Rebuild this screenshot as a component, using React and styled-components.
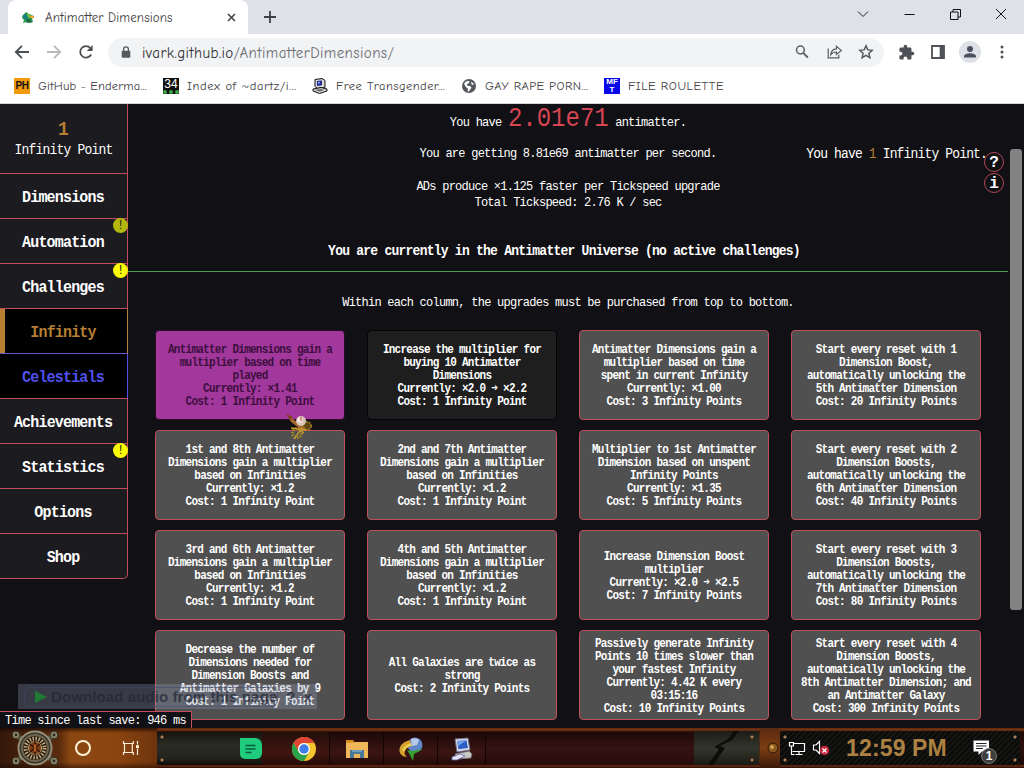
import React from "react";
import styled, { createGlobalStyle, css } from "styled-components";

const navItems = [
  { label: "Dimensions" },
  { label: "Automation", badge: "dim" },
  { label: "Challenges", badge: "bright" },
  { label: "Infinity", variant: "infinity" },
  { label: "Celestials", variant: "celestials" },
  { label: "Achievements" },
  { label: "Statistics", badge: "bright" },
  { label: "Options" },
  { label: "Shop" },
];

const upgrades = [
  {
    state: "bought",
    lines: [
      "Antimatter Dimensions gain a",
      "multiplier based on time",
      "played",
      "Currently: ×1.41",
      "Cost: 1 Infinity Point",
    ],
  },
  {
    state: "available",
    lines: [
      "Increase the multiplier for",
      "buying 10 Antimatter",
      "Dimensions",
      "Currently: ×2.0 ➜ ×2.2",
      "Cost: 1 Infinity Point",
    ],
  },
  {
    lines: [
      "Antimatter Dimensions gain a",
      "multiplier based on time",
      "spent in current Infinity",
      "Currently: ×1.00",
      "Cost: 3 Infinity Points",
    ],
  },
  {
    lines: [
      "Start every reset with 1",
      "Dimension Boost,",
      "automatically unlocking the",
      "5th Antimatter Dimension",
      "Cost: 20 Infinity Points",
    ],
  },
  {
    lines: [
      "1st and 8th Antimatter",
      "Dimensions gain a multiplier",
      "based on Infinities",
      "Currently: ×1.2",
      "Cost: 1 Infinity Point",
    ],
  },
  {
    lines: [
      "2nd and 7th Antimatter",
      "Dimensions gain a multiplier",
      "based on Infinities",
      "Currently: ×1.2",
      "Cost: 1 Infinity Point",
    ],
  },
  {
    lines: [
      "Multiplier to 1st Antimatter",
      "Dimension based on unspent",
      "Infinity Points",
      "Currently: ×1.35",
      "Cost: 5 Infinity Points",
    ],
  },
  {
    lines: [
      "Start every reset with 2",
      "Dimension Boosts,",
      "automatically unlocking the",
      "6th Antimatter Dimension",
      "Cost: 40 Infinity Points",
    ],
  },
  {
    lines: [
      "3rd and 6th Antimatter",
      "Dimensions gain a multiplier",
      "based on Infinities",
      "Currently: ×1.2",
      "Cost: 1 Infinity Point",
    ],
  },
  {
    lines: [
      "4th and 5th Antimatter",
      "Dimensions gain a multiplier",
      "based on Infinities",
      "Currently: ×1.2",
      "Cost: 1 Infinity Point",
    ],
  },
  {
    lines: [
      "Increase Dimension Boost",
      "multiplier",
      "Currently: ×2.0 ➜ ×2.5",
      "Cost: 7 Infinity Points",
    ],
  },
  {
    lines: [
      "Start every reset with 3",
      "Dimension Boosts,",
      "automatically unlocking the",
      "7th Antimatter Dimension",
      "Cost: 80 Infinity Points",
    ],
  },
  {
    lines: [
      "Decrease the number of",
      "Dimensions needed for",
      "Dimension Boosts and",
      "Antimatter Galaxies by 9",
      "Cost: 1 Infinity Point",
    ],
  },
  {
    lines: [
      "All Galaxies are twice as",
      "strong",
      "Cost: 2 Infinity Points",
    ],
  },
  {
    lines: [
      "Passively generate Infinity",
      "Points 10 times slower than",
      "your fastest Infinity",
      "Currently: 4.42 K every",
      "03:15:16",
      "Cost: 10 Infinity Points",
    ],
  },
  {
    lines: [
      "Start every reset with 4",
      "Dimension Boosts,",
      "automatically unlocking the",
      "8th Antimatter Dimension; and",
      "an Antimatter Galaxy",
      "Cost: 300 Infinity Points",
    ],
  },
];

const Favicon = () => (
  <svg width="14" height="14" viewBox="0 0 14 14">
    <path d="M2 4l3-3 3 2 2 1 3 1-2 3 1 3-3 1-3-1-4 1 1-3-2-2z" fill="#2a9d4c" />
    <path d="M1 5l4-2 3 3-3 3z" fill="#157f83" />
    <path d="M6 3l4 0 0 3-3 1z" fill="#7cb93d" />
    <path d="M9 5h4v2H9z" fill="#e0a52e" />
    <path d="M5 8h4l2 3-5 1z" fill="#1d6b45" />
  </svg>
);

const BackIcon = ({ color = "#4b4e52", flip }) => (
  <svg width="16" height="16" viewBox="0 0 16 16" fill="none" stroke={color} strokeWidth="1.8">
    <path d={flip ? "M1 8h13M8 1.8L14.2 8 8 14.2" : "M15 8H2M8 1.8L1.8 8 8 14.2"} />
  </svg>
);

const ReloadIcon = () => (
  <svg width="16" height="16" viewBox="0 0 16 16">
    <path d="M13.2 10.5A5.8 5.8 0 1 1 12.4 4" fill="none" stroke="#4b4e52" strokeWidth="1.8" />
    <path d="M14.6 1v6H8.8z" fill="#4b4e52" />
  </svg>
);

const LockIcon = () => (
  <svg width="10" height="13" viewBox="0 0 10 13">
    <rect x="0.7" y="4.8" width="8.6" height="7" rx="1" fill="#55585c" />
    <path d="M2.6 5V3.2a2.4 2.4 0 0 1 4.8 0V5" fill="none" stroke="#55585c" strokeWidth="1.3" />
  </svg>
);

const SearchIcon = () => (
  <svg width="16" height="16" viewBox="0 0 16 16" fill="none" stroke="#5a5d61" strokeWidth="1.5">
    <circle cx="6.4" cy="6" r="3.9" />
    <path d="M9.2 8.9l4.6 4.6" strokeWidth="1.8" />
  </svg>
);

const ShareIcon = () => (
  <svg width="17" height="16" viewBox="0 0 17 16" fill="none" stroke="#5a5d61" strokeWidth="1.2">
    <path d="M2.2 4.5v9.3h10.6v-3" />
    <path d="M4.8 10.6c.3-3.6 2.2-5.5 5.6-5.7V2.2l4.9 4.2-4.9 4.1V8c-2.4 0-4.2.7-5.6 2.6z" />
  </svg>
);

const StarIcon = () => (
  <svg width="16" height="16" viewBox="0 0 16 16" fill="none" stroke="#55585c" strokeWidth="1.5">
    <path d="M8 1.8l1.8 4.1 4.5.4-3.4 3 1 4.4L8 11.4l-3.9 2.3 1-4.4-3.4-3 4.5-.4z" />
  </svg>
);

const PuzzleIcon = () => (
  <svg width="17" height="17" viewBox="0 0 24 24" fill="#4e5155">
    <path d="M20.5 11H19V7c0-1.1-.9-2-2-2h-4V3.5a2.5 2.5 0 0 0-5 0V5H4c-1.1 0-2 .9-2 2v3.8h1.5a2.7 2.7 0 0 1 0 5.4H2V20c0 1.100.9 2 2 2h3.8v-1.5a2.7 2.7 0 0 1 5.4 0V22H17c1.1 0 2-.9 2-2v-4h1.5a2.5 2.5 0 0 0 0-5z" />
  </svg>
);

const PanelIcon = () => (
  <svg width="14" height="14" viewBox="0 0 14 14">
    <path d="M1 1h12v12H1z" fill="none" stroke="#4e5155" strokeWidth="1.8" />
    <path d="M8.7 1H13v12H8.7z" fill="#4e5155" />
  </svg>
);

const PersonIcon = () => (
  <svg width="14" height="14" viewBox="0 0 14 14" fill="#4a5060">
    <circle cx="7" cy="4" r="3" />
    <path d="M1 12.5v-1.2C1 9.3 4.5 8.3 7 8.3s6 1 6 3v1.2z" />
  </svg>
);

const DotsIcon = () => (
  <svg width="4" height="14" viewBox="0 0 4 14" fill="#4e5155">
    <circle cx="2" cy="2" r="1.5" />
    <circle cx="2" cy="7" r="1.5" />
    <circle cx="2" cy="12" r="1.5" />
  </svg>
);

const GlobeIcon = () => (
  <svg width="16" height="16" viewBox="0 0 16 16">
    <circle cx="8" cy="8" r="7" fill="#55585c" />
    <path d="M3 5.5l2.5-2.3 3-.2-.5 2-2.2 1.3.6 1.5 2.6.2 1.5 1.5-1 1.8-2 2.4-.8-.2.2-2.8-2-1.6z" fill="#fff" />
    <path d="M10 3.5l2.6 2-.2 1.6-1.8-.6z" fill="#fff" />
  </svg>
);

const OldPcIcon = () => (
  <svg width="16" height="16" viewBox="0 0 16 16">
    <path d="M3 1.5L10 .5l3 2v7l-7.5 1L3 8.5z" fill="#d7d7d7" stroke="#111" />
    <path d="M5 3l5-.6v4.8L5 8z" fill="#232a8c" />
    <path d="M6 4l2-.3v1.5L6 5.7z" fill="#8fa9ff" />
    <path d="M1 11l8-1.5 6 1.5v2l-7.5 2.5L1 13z" fill="#cfcfcf" stroke="#111" />
    <path d="M3 12l6-1 3 1-4.500 1.5z" fill="#666" />
  </svg>
);

const CannonCursor = () => (
  <svg width="30" height="28" viewBox="0 0 30 28">
    <circle cx="23" cy="13" r="4.2" fill="#5c4414" stroke="#a47d24" strokeWidth="1.5" strokeDasharray="2 1" />
    <path d="M3 2l19 13-3 3L7 9z" fill="#a8672a" />
    <path d="M2 1l7 3-3 3z" fill="#7c3f22" />
    <circle cx="13" cy="20" r="4.5" fill="none" stroke="#a98621" strokeWidth="3" strokeDasharray="1.5 1.2" />
    <path d="M7 15l16 2M10 26l8-11M14 15l6 5" stroke="#c29a32" strokeWidth="1.3" />
    <circle cx="17" cy="8" r="5" fill="#d9c3b8" />
    <circle cx="16" cy="7" r="2.8" fill="#f3e9e4" />
    <path d="M17 4v4" stroke="#b5392c" />
  </svg>
);

const StartOrb = () => (
  <svg width="50" height="36" viewBox="0 0 50 36">
    {[[6, 5], [44, 5], [6, 31], [44, 31]].map(([x, y]) => (
      <g key={`${x}-${y}`}>
        <path d={`M25 18L${x} ${y}`} stroke="#5d5a48" strokeWidth="5" />
        <circle cx={x} cy={y} r="3.8" fill="#8b8871" stroke="#34301f" />
        <circle cx={x} cy={y} r="1.4" fill="#2a2619" />
      </g>
    ))}
    <circle cx="25" cy="18" r="16.5" fill="#3a352a" stroke="#938e75" strokeWidth="2" />
    <circle cx="25" cy="18" r="13" fill="#29190d" stroke="#6c654f" strokeWidth="2" />
    <circle cx="25" cy="18" r="9.5" fill="none" stroke="#bba983" strokeWidth="4" strokeDasharray="1.5 1.5" />
    <circle cx="25" cy="18" r="6.5" fill="#7a3b17" stroke="#c0a272" strokeWidth="1" />
    <path d="M25 11v14M20 14l10 8M30 14l-10 8" stroke="#34170b" strokeWidth="1.5" />
    <path d="M25 14.5v7" stroke="#df7927" strokeWidth="1.5" />
  </svg>
);

const TaskViewIcon = () => (
  <svg width="18" height="16" viewBox="0 0 18 16" fill="none" stroke="#fff1d5" strokeWidth="1.2">
    <path d="M1.5 1v2.5h9.8V1M1.5 15v-2.5h9.8V15M2.5 3.5v9M10.3 3.5v9M15.5 1v3.5M15.5 8.5V15" />
    <path d="M14 5.2h3V8h-3z" fill="#fff1d5" stroke="none" />
  </svg>
);

const NoteIcon = () => (
  <svg width="22" height="22" viewBox="0 0 22 22">
    <path d="M0 0h15a7 7 0 0 1 7 7v8a6 6 0 0 1-6 6H5a5 5 0 0 1-5-5z" fill="#1fcb7c" />
    <path d="M5.5 7.5h10M5.5 11h10M5.5 14.5h6" stroke="#0b5c3c" strokeWidth="1.6" />
  </svg>
);

const ChromeIcon = () => (
  <svg width="24" height="24" viewBox="0 0 24 24">
    <circle cx="12" cy="12" r="12" fill="#f6c52d" />
    <path d="M1.6 6A12 12 0 0 1 22.400 6H12a6 6 0 0 0-5.200 9z" fill="#dd4535" />
    <path d="M1.6 6A12 12 0 0 0 12 24l5.200-9A6 6 0 0 1 6.800 15z" fill="#2ba24c" />
    <circle cx="12" cy="12" r="6" fill="#fff" />
    <circle cx="12" cy="12" r="4.7" fill="#3f7ee8" />
  </svg>
);

const FolderIcon = () => (
  <svg width="24" height="20" viewBox="0 0 24 20">
    <path d="M1 1h7l2 3H1z" fill="#d78b1a" />
    <path d="M1 4l10-1h12v16H1z" fill="#efb65a" />
    <path d="M5 19v-8h14v8h-4v-4H9v4z" fill="#48799b" />
    <path d="M7 11h10v2H7z" fill="#6ea0bd" />
  </svg>
);

const IdmIcon = () => (
  <svg width="26" height="24" viewBox="0 0 26 24">
    <circle cx="17" cy="8" r="7.5" fill="#5f86c9" />
    <path d="M13 2q5-2 8 1l-2 5-5 1z" fill="#b8c9e8" />
    <path d="M12 3C4 5 0 10 2 16c2 4 7 4 7 4-4-3-3-8 4-11z" fill="#d7a12a" />
    <path d="M4 13c2-4 5-6 9-7l1 3c-4 0-7 2-8 6z" fill="#e9cf57" />
    <path d="M9 13l5 1 11-2-9 5-1 7-3-6z" fill="#35a02f" />
  </svg>
);

const DesktopIcon = () => (
  <svg width="22" height="24" viewBox="0 0 22 24">
    <path d="M4 2l13-1 2 12-13 2z" fill="#dcdce8" stroke="#6b6c86" />
    <path d="M6 4l9.5-.8L17 11l-9.5 1.3z" fill="#2b5fc4" />
    <path d="M6 4l9.5-.8-8.500 6z" fill="#6ea0e8" />
    <path d="M4 17l14-3 3 3-1 4-14 1z" fill="#c9c7c4" stroke="#6c6870" />
    <path d="M1 20l8-3 5 2-8 4H1z" fill="#e6e4f0" stroke="#6464a8" strokeWidth=".8" />
  </svg>
);

const NetworkIcon = () => (
  <svg width="18" height="15" viewBox="0 0 18 15" fill="none" stroke="#fff" strokeWidth="1.2">
    <path d="M6 2.5h10.5v8H4.5M11 10.5v3M7.5 13.5h7" />
    <path d="M1.5 1.5h4V5h-4zM3.500 5v8.5h3" />
  </svg>
);

const MutedIcon = () => (
  <svg width="18" height="16" viewBox="0 0 18 16">
    <path d="M1.5 5H4l3.500-3.500v12L4 10H1.500z" fill="none" stroke="#fff" strokeWidth="1.2" />
    <circle cx="12.5" cy="10.5" r="4.7" fill="#c5283d" />
    <path d="M10.5 8.5l4 4M14.5 8.5l-4 4" stroke="#fff" strokeWidth="1.2" />
  </svg>
);

const NotifyIcon = () => (
  <svg width="17" height="16" viewBox="0 0 17 16">
    <path d="M.5.5H16v11H9L5.500 15v-3.500h-5z" fill="#fff" />
    <path d="M3 3.5h10.5M3 6h10.5M3 8.5h7" stroke="#222" />
  </svg>
);

const App = () => {
  return (
    <Screen>
      <GlobalStyle />
      <TabStrip>
        <Tab>
          <Favicon />
          <TabTitle>Antimatter Dimensions</TabTitle>
          <svg width="9" height="9" viewBox="0 0 9 9" stroke="#3c4043" strokeWidth="1.5">
            <path d="M1 1l7 7M8 1L1 8" />
          </svg>
        </Tab>
        <NewTab>
          <svg width="12" height="12" viewBox="0 0 12 12" stroke="#3c4043" strokeWidth="1.8">
            <path d="M6 0v12M0 6h12" />
          </svg>
        </NewTab>
        <WindowButtons>
          <svg width="12" height="10" viewBox="0 0 12 10" fill="none" stroke="#222">
            <path d="M1 2.5l5 5 5-5" />
          </svg>
          <svg width="11" height="10" viewBox="0 0 11 10" stroke="#111">
            <path d="M.5 5.5h10" />
          </svg>
          <svg width="11" height="11" viewBox="0 0 11 11" fill="none" stroke="#111">
            <path d="M.5 3H8v7.500H.5zM3 3V.5h7.500V8H8" />
          </svg>
          <svg width="12" height="12" viewBox="0 0 12 12" stroke="#111">
            <path d="M1 1l10 10M11 1L1 11" />
          </svg>
        </WindowButtons>
      </TabStrip>

      <Toolbar>
        <NavButtons>
          <BackIcon />
          <BackIcon flip color="#b8babd" />
          <ReloadIcon />
        </NavButtons>
        <AddressBar>
          <LockIcon />
          <Address>
            <b>ivark.github.io</b>/AntimatterDimensions/
          </Address>
          <ToolIcon><SearchIcon /></ToolIcon>
          <ToolIcon><ShareIcon /></ToolIcon>
          <ToolIcon><StarIcon /></ToolIcon>
        </AddressBar>
        <ToolIcon><PuzzleIcon /></ToolIcon>
        <ToolIcon><PanelIcon /></ToolIcon>
        <ToolIcon><Avatar><PersonIcon /></Avatar></ToolIcon>
        <ToolIcon><DotsIcon /></ToolIcon>
      </Toolbar>

      <Bookmarks>
        <Bookmark>
          <PhIcon>PH</PhIcon>
          <BookmarkText $spacing="0.15px">GitHub - Enderma...</BookmarkText>
        </Bookmark>
        <Bookmark>
          <DartzIcon>34</DartzIcon>
          <BookmarkText $spacing="0.6px">Index of ~dartz/i...</BookmarkText>
        </Bookmark>
        <Bookmark>
          <OldPcIcon />
          <BookmarkText $spacing="0.45px">Free Transgender...</BookmarkText>
        </Bookmark>
        <Bookmark $width={143}>
          <GlobeIcon />
          <BookmarkText $spacing="0.4px">GAY RAPE PORN...</BookmarkText>
        </Bookmark>
        <Bookmark>
          <MftIcon>
            <span>MF</span>
            <span>T</span>
          </MftIcon>
          <BookmarkText $spacing="0.55px">FILE ROULETTE</BookmarkText>
        </Bookmark>
      </Bookmarks>

      <Game>
        <Sidebar>
          <Currency>
            <strong>1</strong>
            <span>Infinity Point</span>
          </Currency>
          {navItems.map((item) => (
            <NavItem key={item.label} $variant={item.variant}>
              <NavLabel>{item.label}</NavLabel>
              {item.badge && <Badge $dim={item.badge === "dim"}>!</Badge>}
            </NavItem>
          ))}
        </Sidebar>

        <Content>
          <Antimatter>
            You have <Amount>2.01e71</Amount> antimatter.
          </Antimatter>
          <RateRow>
            <Text>You are getting 8.81e69 antimatter per second.</Text>
            <PointsText>
              You have <em>1</em> Infinity Point.
            </PointsText>
          </RateRow>
          <Tickspeed>
            <Text>ADs produce ×1.125 faster per Tickspeed upgrade</Text>
            <Text>Total Tickspeed: 2.76 K / sec</Text>
          </Tickspeed>
          <Universe>
            <Text>
              You are currently in the Antimatter Universe (no active challenges)
            </Text>
          </Universe>
          <Hint>
            Within each column, the upgrades must be purchased from top to bottom.
          </Hint>
          <UpgradeGrid>
            {upgrades.map((upgrade, i) => (
              <Upgrade key={i} $state={upgrade.state}>
                {upgrade.lines.map((line) => (
                  <UpgradeLine key={line}>{line}</UpgradeLine>
                ))}
              </Upgrade>
            ))}
          </UpgradeGrid>
        </Content>

        <ScrollTrack>
          <ScrollThumb />
        </ScrollTrack>

        <HelpButtons>
          <HelpButton>?</HelpButton>
          <HelpButton>i</HelpButton>
        </HelpButtons>
        <Cursor>
          <CannonCursor />
        </Cursor>
        <DownloadBar>
          <DownloadLabel>
            <svg width="14" height="12" viewBox="0 0 14 12">
              <path d="M1 0l12 6-12 6z" fill="#1f7a35" />
            </svg>
            Download audio from this page
          </DownloadLabel>
          <span>?</span>
          <span>x</span>
        </DownloadBar>
        <SaveTimer>
          <Text>Time since last save: 946 ms</Text>
        </SaveTimer>
      </Game>

      <Taskbar>
        <StartArea>
          <StartOrb />
          <SearchRing />
          <TaskViewIcon />
        </StartArea>
        <DarkPanel>
          <Rivets />
          <NoteIcon />
        </DarkPanel>
        <ActiveTaskButton><ChromeIcon /></ActiveTaskButton>
        <TaskButton><FolderIcon /></TaskButton>
        <TaskButton><IdmIcon /></TaskButton>
        <TaskButton $width={48}><DesktopIcon /></TaskButton>
        <TaskSpace />
        <GlassPanel>
          <svg width="66" height="34" viewBox="0 0 66 34">
            <path d="M40 0l-6 8-14 8 5 2-11 16h5l12-17-5-2 12-6 7-9z" fill="#0b0d09" />
          </svg>
          <Rivets />
        </GlassPanel>
        <Joint>
          <svg width="12" height="12" viewBox="0 0 12 12">
            <circle cx="6" cy="6" r="5" fill="#8a5a1d" stroke="#2a1407" />
            <circle cx="5" cy="5" r="2" fill="#d4a24d" />
          </svg>
        </Joint>
        <Tray>
          <Rivets />
          <NetworkIcon />
          <MutedIcon />
          <Clock>12:59 PM</Clock>
          <Notify>
            <NotifyIcon />
            <NotifyCount>1</NotifyCount>
          </Notify>
          <Rivets />
        </Tray>
      </Taskbar>
    </Screen>
  );
};

export default App;


const GlobalStyle = createGlobalStyle`
  * {
    box-sizing: border-box;
  }

  body {
    margin: 0;
    overflow: hidden;
  }

  svg {
    display: block;
    flex-shrink: 0;
  }
`;

const mono = css`
  font-family: "Liberation Mono", "DejaVu Sans Mono", monospace;
`;

/* the game's typeface is tall and narrow */
const tall = css`
  transform: translateY(0.8px) scaleY(1.14);
`;

const Screen = styled.div`
  width: 1024px;
  height: 768px;
  display: flex;
  flex-direction: column;
  overflow: hidden;
  background: #fff;
  font-family: "Comic Sans MS", "Comic Neue", Lato, sans-serif;
  white-space: nowrap;
`;

const TabStrip = styled.div`
  height: 34px;
  display: flex;
  align-items: stretch;
  padding-left: 8px;
  background: #dee1e8;
`;

const Tab = styled.div`
  width: 240px;
  display: flex;
  align-items: center;
  padding: 1px 12px 0 13px;
  background: #fff;
  border-radius: 8px 8px 0 0;
`;

const TabTitle = styled.span`
  flex: 1;
  margin-left: 10px;
  color: #3f4145;
  font-size: 13px;
  letter-spacing: 0.1px;
`;

const NewTab = styled.div`
  display: flex;
  align-items: center;
  padding-left: 16px;
`;

const WindowButtons = styled.div`
  width: 184px;
  margin-left: auto;
  padding-bottom: 6px;
  display: grid;
  grid-template-columns: repeat(4, 46px);
  align-items: center;
  justify-items: center;
`;

const Toolbar = styled.div`
  height: 36px;
  display: flex;
  align-items: center;
  padding: 0 6px 0 14px;
`;

const NavButtons = styled.div`
  width: 94px;
  display: flex;
  gap: 16px;
`;

const AddressBar = styled.div`
  width: 776px;
  height: 29px;
  margin-right: 6px;
  display: flex;
  align-items: center;
  padding: 0 2px 0 13px;
  background: #f2f3f5;
  border-radius: 15px;
`;

const Address = styled.span`
  flex: 1;
  margin-left: 11px;
  padding-top: 1px;
  color: #6c6f73;
  font-size: 15px;
  letter-spacing: 0.42px;

  b {
    color: #303134;
    font-weight: 400;
  }
`;

const ToolIcon = styled.div`
  width: 32px;
  display: flex;
  align-items: center;
  justify-content: center;
`;

const Avatar = styled.div`
  width: 22px;
  height: 22px;
  display: flex;
  align-items: center;
  justify-content: center;
  background: #dee1e8;
  border-radius: 50%;
`;

const Bookmarks = styled.div`
  height: 34px;
  display: flex;
  align-items: center;
  padding: 0 0 2px 14px;
  border-bottom: 1px solid #d5d6d8;
`;

const Bookmark = styled.div`
  width: ${(props) => props.$width || 149}px;
  display: flex;
  align-items: center;
  gap: 8px;
`;

const BookmarkText = styled.span`
  color: #3f4145;
  font-size: 12.5px;
  letter-spacing: ${(props) => props.$spacing};
`;

const SiteIcon = styled.span`
  width: 16px;
  height: 16px;
  flex-shrink: 0;
  overflow: hidden;
  text-align: center;
  font-family: "Liberation Sans", Arial, sans-serif;
`;

const PhIcon = styled(SiteIcon)`
  background: #f29a0c;
  color: #111;
  font-size: 10px;
  font-weight: bold;
  line-height: 16px;
  letter-spacing: -0.5px;
`;

const DartzIcon = styled(SiteIcon)`
  background: #111;
  border-bottom: 4px dotted #3fa549;
  color: #fff;
  font-size: 12px;
  line-height: 12px;
`;

const MftIcon = styled(SiteIcon)`
  display: flex;
  flex-direction: column;
  background: #0808e8;
  color: #fff;
  font-size: 8px;
  font-weight: bold;
  line-height: 8px;
`;

const Game = styled.div`
  position: relative;
  height: 624px;
  display: flex;
  align-items: flex-start;
  overflow: hidden;
  background: #111014;
  color: #fff;
  ${mono}
`;

const Sidebar = styled.div`
  width: 128px;
  flex-shrink: 0;
`;

const Currency = styled.div`
  height: 70px;
  display: flex;
  flex-direction: column;
  align-items: center;
  padding-top: 15px;
  background: #1c1b20;
  border: 1px solid #c24e60;
  border-width: 0 1px 1px 0;

  strong {
    color: #b67f33;
    font-size: 18px;
    line-height: 21px;
    ${tall}
  }

  span {
    font-size: 13px;
    line-height: 19px;
    letter-spacing: -0.8px;
    ${tall}
  }
`;

const navVariants = {
  infinity: css`
    background: #000;
    border-bottom-color: #6a5ac8;
    border-right-color: #b67f33;
    box-shadow: inset 5px 0 #b67f33;
    color: #b67f33;
  `,
  celestials: css`
    background: #000;
    border-right-color: #5151ec;
    color: #5151ec;
  `,
};

const NavItem = styled.div`
  position: relative;
  height: 45px;
  display: flex;
  align-items: center;
  justify-content: center;
  padding: 2px 1px 0 0;
  background: #1c1b20;
  border: 1px solid #c24e60;
  border-width: 0 1px 1px 0;
  font-size: 15px;
  font-weight: bold;
  letter-spacing: -0.82px;

  &:last-child {
    border-radius: 0 0 5px 0;
  }

  ${(props) => navVariants[props.$variant]}
`;

const NavLabel = styled.span`
  ${tall}
`;

const Badge = styled.span`
  position: absolute;
  top: -1px;
  right: -1px;
  width: 15px;
  height: 15px;
  border-radius: 50%;
  background: ${(props) => (props.$dim ? "#b5b80c" : "#fbfb05")};
  color: #222;
  font-size: 12px;
  font-weight: normal;
  line-height: 16px;
  letter-spacing: 0;
  text-align: center;
`;

const Content = styled.div`
  width: 880px;
  flex-shrink: 0;
  text-align: center;
  font-size: 12px;
  letter-spacing: -0.75px;
`;

const Antimatter = styled.div`
  height: 33px;
  line-height: 29px;
  ${tall}
`;

const Amount = styled.span`
  color: #d64552;
  font-size: 24px;
  letter-spacing: 0;
`;

const Text = styled.div`
  line-height: 16px;
  ${tall}
`;

const RateRow = styled.div`
  height: 32px;
  display: grid;
  grid-template-columns: 1fr auto 1fr;
  align-items: center;

  ${Text} {
    grid-column: 2;
  }
`;

const PointsText = styled.div`
  justify-self: end;
  margin-right: 21px;
  font-size: 13px;
  letter-spacing: -0.85px;
  ${tall}

  em {
    color: #b67f33;
    font-style: normal;
  }
`;

const Tickspeed = styled.div`
  padding-top: 9px;
`;

const Universe = styled.div`
  height: 62px;
  padding: 33px 8px 0 0;
  border-bottom: 1px solid #4da055;
  font-size: 13px;
  font-weight: bold;
  letter-spacing: -0.76px;
`;

const Hint = styled.div`
  margin: 22px 0 20px;
  line-height: 16px;
  ${tall}
`;

const UpgradeGrid = styled.div`
  display: grid;
  grid-template-columns: repeat(4, 190px);
  justify-content: center;
  gap: 10px 22px;
`;

const upgradeStates = {
  bought: css`
    background: #a2379c;
    border-color: #2b0d2a;
    color: #3c0f3c;
  `,
  available: css`
    background: #1e1e1e;
    border-color: #050505;
  `,
};

const Upgrade = styled.div`
  height: 90px;
  display: flex;
  flex-direction: column;
  align-items: center;
  justify-content: center;
  padding-top: 1px;
  background: #505050;
  border: 1px solid #c04f5c;
  border-radius: 4px;
  font-size: 11px;
  font-weight: bold;
  line-height: 13px;
  letter-spacing: -0.74px;

  ${(props) => upgradeStates[props.$state]}
`;

const UpgradeLine = styled.span`
  height: 13px;
  ${tall}
`;

const ScrollTrack = styled.div`
  width: 16px;
  padding: 45px 2px 0;
`;

const ScrollThumb = styled.div`
  height: 461px;
  background: #828282;
  border-radius: 3px;
`;

const HelpButtons = styled.div`
  position: absolute;
  top: 48px;
  right: 20px;
  display: flex;
  flex-direction: column;
  gap: 1px;
`;

const HelpButton = styled.div`
  width: 20px;
  height: 20px;
  border: 1px solid #b04858;
  border-radius: 50%;
  font-size: 16px;
  font-weight: bold;
  line-height: 20px;
  text-align: center;
`;

const Cursor = styled.div`
  position: absolute;
  left: 284px;
  top: 309px;
`;

const DownloadBar = styled.div`
  position: absolute;
  left: 18px;
  top: 580px;
  width: 299px;
  height: 25px;
  display: flex;
  align-items: center;
  gap: 8px;
  padding: 2px 6px;
  background: rgba(150, 160, 185, 0.3);
  color: rgba(32, 36, 54, 0.7);
  font: bold 15px "Liberation Sans", Arial, sans-serif;
`;

const DownloadLabel = styled.div`
  height: 20px;
  flex: 1;
  display: flex;
  align-items: center;
  gap: 3px;
  padding-left: 9px;
  border: 1px solid rgba(65, 75, 110, 0.55);
  border-radius: 6px;
  letter-spacing: 0.1px;
`;

const SaveTimer = styled.div`
  position: absolute;
  left: 0;
  bottom: 0;
  width: 192px;
  height: 17px;
  padding-left: 5px;
  background: #111014;
  border: 1px solid #c24e60;
  border-width: 1px 1px 0 0;
  font-size: 12px;
  letter-spacing: -0.74px;
`;

const Taskbar = styled.div`
  height: 40px;
  display: flex;
  align-items: stretch;
  background: linear-gradient(#5d2810 0, #7a3612 2px, #1c0907 4px, #2c100d 50%, #190706 36px, #6b2b10 38px, #240b05 100%);
`;

const StartArea = styled.div`
  width: 157px;
  display: flex;
  align-items: center;
  padding-left: 10px;
  background:
    linear-gradient(rgba(20, 6, 0, 0.7) 0, transparent 5px, transparent 34px, rgba(20, 6, 0, 0.5) 100%),
    linear-gradient(90deg, #35180a 0, #5b2c0e 38%, #8b4712 45%, #8a4410 75%, #6e330d 100%);
`;

const SearchRing = styled.div`
  width: 16px;
  height: 16px;
  margin: 0 31px 0 15px;
  flex-shrink: 0;
  border: 2px solid #fff1d5;
  border-radius: 50%;
`;

const DarkPanel = styled.div`
  width: 105px;
  margin: 4px 0 3px;
  display: flex;
  align-items: center;
  justify-content: space-between;
  background: linear-gradient(#15150f, #2b2c23 40%, #22231c 80%, #0d0c08);
  border-radius: 4px 0 0 4px;
`;

const Rivets = styled.span`
  width: 4px;
  height: 27px;
  margin: 0 3px;
  flex-shrink: 0;
  background:
    radial-gradient(circle at 2px 2px, #d8b48c 0, #6b4a31 1.5px, transparent 2px) top / 4px 4px no-repeat,
    radial-gradient(circle at 2px 2px, #d8b48c 0, #6b4a31 1.5px, transparent 2px) bottom / 4px 4px no-repeat;
`;

const TaskButton = styled.div`
  width: ${(props) => props.$width || 54}px;
  margin: 4px 0 3px;
  display: flex;
  align-items: center;
  justify-content: center;
  background: linear-gradient(#1c0808, #3a1512 60%, #240b09);
  border-right: 1px solid #120404;
`;

const ActiveTaskButton = styled(TaskButton)`
  width: 68px;
  padding-left: 16px;
  background: linear-gradient(#220d0a, #401611 60%, #260b09);
`;

const TaskSpace = styled.div`
  flex: 1;
  margin: 4px 0 3px;
  background: linear-gradient(#1d0909, #351312 50%, #250c0b);
`;

const GlassPanel = styled.div`
  width: 66px;
  margin: 3px 0;
  display: flex;
  align-items: center;
  background: linear-gradient(#1b1c17, #34352c 50%, #1b1b15);
  border: 1px solid #4b2b14;
  border-width: 0 1px 0 0;
  border-radius: 0 4px 4px 0;

  ${Rivets} {
    margin-left: -10px;
  }
`;

const Joint = styled.div`
  width: 20px;
  display: flex;
  align-items: center;
  justify-content: center;
  padding-left: 6px;
  background: linear-gradient(#5a2a0f, #7b3e14 50%, #3a1808);
`;

const Tray = styled.div`
  width: 240px;
  margin: 3px 4px 3px 0;
  display: flex;
  align-items: center;
  background: repeating-linear-gradient(135deg, #0b0b0a 0 2px, #151514 2px 4px);
  border-radius: 4px;

  > svg {
    margin-left: -2px;
  }

  > svg + svg {
    margin-left: 6px;
  }
`;

const Clock = styled.span`
  width: 103px;
  margin-left: 16px;
  color: #ad8142;
  font: bold 23px "Liberation Sans", Arial, sans-serif;
  letter-spacing: 0.15px;
`;

const Notify = styled.div`
  position: relative;
  margin-left: 24px;
  margin-right: auto;
`;

const NotifyCount = styled.span`
  position: absolute;
  left: 8px;
  top: 8px;
  width: 16px;
  height: 16px;
  background: #3e3e3e;
  border: 1px solid #777;
  border-radius: 50%;
  color: #fff;
  font: bold 12px/14px "Liberation Sans", Arial, sans-serif;
  text-align: center;
`;
